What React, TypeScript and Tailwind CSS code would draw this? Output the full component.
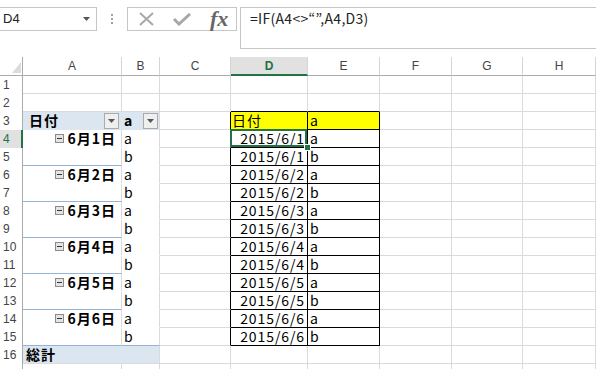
import React from "react";

const letters = ["A", "B", "C", "D", "E", "F", "G", "H"];
const rows = Array.from({ length: 17 }, (_, i) => i + 1);

const jp = "font-['Noto_Sans_CJK_JP',sans-serif]";
const ui = "font-['Liberation_Sans',sans-serif]";

function DropButton() {
  return (
    <div className="flex h-[16px] w-[15px] shrink-0 items-center justify-center border border-[#ababab] bg-[#efefef]">
      <svg width="7" height="4" viewBox="0 0 7 4">
        <path d="M0 0h7L3.5 4z" fill="#555" />
      </svg>
    </div>
  );
}

function Minus() {
  return (
    <span className="flex h-[9px] w-[9px] items-center justify-center border border-[#8a8a8a] bg-[#e4e4e4]">
      <span className="h-px w-[5px] bg-[#333]" />
    </span>
  );
}

function Cell({ r, c }: { r: number; c: number }) {
  let right = "border-r-[#dadada]";
  let bottom = "border-b-[#dadada]";
  let bg = "bg-white";
  let body: React.ReactNode = null;
  let align = "justify-start";

  // pivot table A3:B16
  if (c <= 1 && r >= 3 && r <= 14) bottom = "border-b-transparent";
  if (c === 0 && [5, 7, 9, 11, 13].includes(r)) bottom = "border-b-[#95b3d7]";
  if (c <= 1 && r === 15) bottom = "border-b-[#95b3d7]";
  if (c === 0 && (r === 3 || r === 16)) right = "border-r-transparent";
  if (c <= 1 && (r === 3 || r === 16)) bg = "bg-[#dce6f1]";

  // source list D3:E15
  if ((c === 3 || c === 4) && r >= 2 && r <= 15) bottom = "border-b-black";
  if (c >= 2 && c <= 4 && r >= 3 && r <= 15) right = "border-r-black";
  if ((c === 3 || c === 4) && r === 3) bg = "bg-[#ffff00]";

  if (c === 0 && r === 3) {
    align = "justify-between pl-[6px] pr-[2px]";
    body = (
      <>
        <span className="font-bold tracking-[1px]">日付</span>
        <DropButton />
      </>
    );
  } else if (c === 1 && r === 3) {
    align = "justify-between pl-[2px] pr-[1px]";
    body = (
      <>
        <span className="font-bold">a</span>
        <DropButton />
      </>
    );
  } else if (c === 0 && r >= 4 && r <= 14 && r % 2 === 0) {
    align = "justify-end gap-[3px] pr-[5px]";
    body = (
      <>
        <Minus />
        <span className="font-bold tracking-[1px]">6月{(r - 2) / 2}日</span>
      </>
    );
  } else if (c === 1 && r >= 4 && r <= 15) {
    align = "pl-[2px]";
    body = r % 2 === 0 ? "a" : "b";
  } else if (c === 0 && r === 16) {
    align = "pl-[3px]";
    body = <span className="font-bold tracking-[1px]">総計</span>;
  } else if (c === 3 && r === 3) {
    align = "pl-[1px] tracking-[1px]";
    body = "日付";
  } else if (c === 4 && r === 3) {
    align = "pl-[2px]";
    body = "a";
  } else if (c === 3 && r >= 4 && r <= 15) {
    align = "justify-end pr-[2px] tracking-[0.9px]";
    body = `2015/6/${Math.floor((r - 4) / 2) + 1}`;
  } else if (c === 4 && r >= 4 && r <= 15) {
    align = "pl-[2px]";
    body = r % 2 === 0 ? "a" : "b";
  }

  const selected = c === 3 && r === 4;

  return (
    <div
      className={`relative flex h-[18px] items-center whitespace-nowrap border-r border-b text-[14px] leading-[17px] text-black ${right} ${bottom} ${bg} ${align}`}
    >
      {body}
      {selected && (
        <>
          <div className="pointer-events-none absolute top-[-1px] left-[-1px] right-0 bottom-0 z-10 border-2 border-[#217346]" />
          <div className="absolute right-[-4px] bottom-[-4px] z-20 h-[7px] w-[7px] border border-white bg-[#217346]" />
        </>
      )}
    </div>
  );
}

export default function App() {
  return (
    <div className={`h-[369px] w-[596px] overflow-hidden bg-white ${jp}`}>
      {/* name box and formula bar */}
      <div className="flex h-[57px] items-start pt-[7px]">
        <div className="ml-[-1px] flex h-[24px] w-[98px] items-center justify-between border border-[#c6c6c6] pl-[3px] pr-[6px]">
          <span className={`${ui} text-[13px] text-[#222]`}>D4</span>
          <svg width="7" height="4" viewBox="0 0 7 4">
            <path d="M0 0h7L3.5 4z" fill="#555" />
          </svg>
        </div>
        <div className="flex h-[24px] w-[30px] flex-col items-center justify-center gap-[2px]">
          <span className="h-[2px] w-[2px] bg-[#a0a0a0]" />
          <span className="h-[2px] w-[2px] bg-[#a0a0a0]" />
          <span className="h-[2px] w-[2px] bg-[#a0a0a0]" />
        </div>
        <div className="flex h-[24px] w-[110px] items-center border border-[#c6c6c6] pl-[11px]">
          <svg width="15" height="14" viewBox="0 0 15 14">
            <path d="M1 1l13 12M14 1L1 13" stroke="#a8a8a8" strokeWidth="2" fill="none" />
          </svg>
          <svg className="ml-[19px]" width="18" height="13" viewBox="0 0 18 13">
            <path d="M1 6l5 5L17 1" stroke="#a8a8a8" strokeWidth="3" fill="none" />
          </svg>
          <span className="ml-[19px] font-['Liberation_Serif',serif] text-[22px] font-bold italic leading-none text-[#666]">
            fx
          </span>
        </div>
        <div className="ml-[3px] h-[42px] flex-1 border border-r-0 border-[#c6c6c6] pl-[9px] pt-[1px] text-[14px] leading-[18px] tracking-[0.3px] text-[#222]">
          =IF(A4&lt;&gt;“”,A4,D3)
        </div>
      </div>

      {/* sheet */}
      <div className="grid grid-cols-[23px_99px_38px_71px_77px_72px_72px_71px_73px]">
        <div className="relative h-[19px] border-r border-b border-r-[#ababab] border-b-[#ababab]">
          <svg className="absolute right-[1px] bottom-[2px]" width="9" height="11" viewBox="0 0 9 11">
            <path d="M9 0v11H0z" fill="#dcdcdc" />
          </svg>
        </div>
        {letters.map((l) =>
          l === "D" ? (
            <div
              key={l}
              className={`${ui} flex h-[19px] items-center justify-center border-r border-b-2 border-r-[#d4d4d4] border-b-[#217346] bg-[#e1e1e1] text-[12px] font-bold text-[#217346]`}
            >
              {l}
            </div>
          ) : (
            <div
              key={l}
              className={`${ui} flex h-[19px] items-center justify-center border-r border-b border-r-[#d4d4d4] border-b-[#ababab] text-[12px] text-[#444]`}
            >
              {l}
            </div>
          )
        )}

        {rows.map((r) => (
          <React.Fragment key={r}>
            {r === 4 ? (
              <div
                className={`${ui} flex h-[18px] items-center border-r-2 border-r-[#217346] bg-[#e1e1e1] pl-[3px] text-[12px] text-[#217346]`}
              >
                {r}
              </div>
            ) : (
              <div className={`${ui} flex h-[18px] items-center border-r border-r-[#ababab] pl-[3px] text-[12px] text-[#444]`}>
                {r < 17 ? r : ""}
              </div>
            )}
            {letters.map((_, c) => (
              <Cell key={c} r={r} c={c} />
            ))}
          </React.Fragment>
        ))}
      </div>
    </div>
  );
}
